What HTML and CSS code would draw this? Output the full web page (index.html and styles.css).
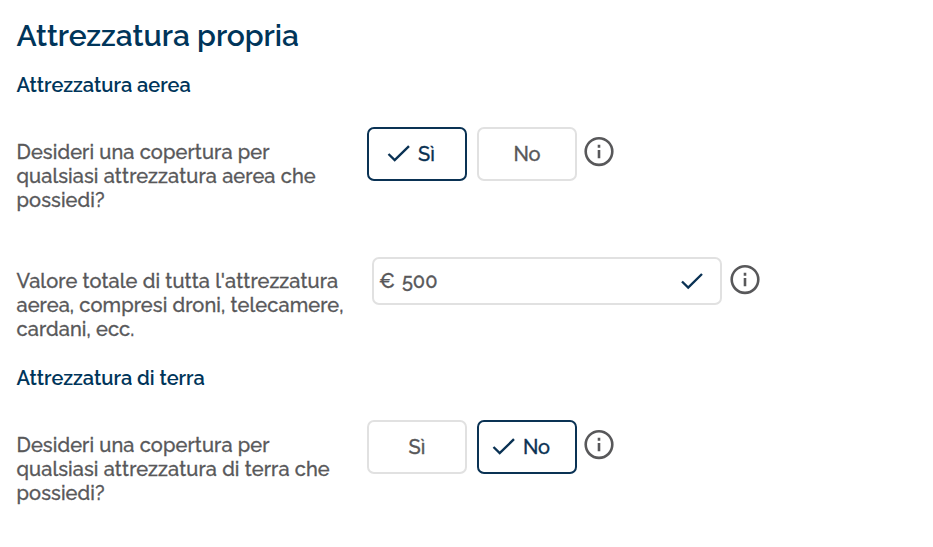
FILE: index.html
```
<!DOCTYPE html>
<html lang="it">

<head>
	<meta charset="UTF-8">
	<meta name="viewport" content="width=device-width, initial-scale=1.0">
	<title>Attrezzatura propria</title>
	<link rel="stylesheet" href="styles.css">
</head>

<body>
	<h1>Attrezzatura propria</h1>

	<h2>Attrezzatura aerea</h2>
	<div class="row row-choice">
		<div class="question">
			Desideri una copertura per<br>
			qualsiasi attrezzatura aerea che<br>
			possiedi?
		</div>
		<button class="btn btn-selected">
			<svg class="check" viewBox="0 0 24 18"><path d="M1.5 9 L7.7 15 L22 1.2" /></svg>
			<span>Sì</span>
		</button>
		<button class="btn"><span>No</span></button>
		<svg class="info" viewBox="0 0 30 30"><circle cx="15" cy="14.6" r="13.3" /><path d="M15 13v8.3M15 7.8v3" /></svg>
	</div>

	<div class="row row-value">
		<div class="question">
			Valore totale di tutta l'attrezzatura<br>
			aerea, compresi droni, telecamere,<br>
			cardani, ecc.
		</div>
		<div class="field">
			<span class="currency">€</span>
			<span class="amount">500</span>
			<svg class="check" viewBox="0 0 24 18"><path d="M2 9.5 L8.2 15.5 L22 2" /></svg>
		</div>
		<svg class="info" viewBox="0 0 30 30"><circle cx="15" cy="14.6" r="13.3" /><path d="M15 13v8.3M15 7.8v3" /></svg>
	</div>

	<h2>Attrezzatura di terra</h2>
	<div class="row row-choice">
		<div class="question">
			Desideri una copertura per<br>
			qualsiasi attrezzatura di terra che<br>
			possiedi?
		</div>
		<button class="btn"><span>Sì</span></button>
		<button class="btn btn-selected">
			<svg class="check" viewBox="0 0 24 18"><path d="M1.5 9 L7.7 15 L22 1.2" /></svg>
			<span>No</span>
		</button>
		<svg class="info" viewBox="0 0 30 30"><circle cx="15" cy="14.6" r="13.3" /><path d="M15 13v8.3M15 7.8v3" /></svg>
	</div>
</body>

</html>
```

FILE: styles.css
```
* {
	box-sizing: border-box;
	font-family: Raleway, Lato, sans-serif;
}

body {
	margin: 0;
	padding: 16px 16px 0 16.5px;
	background-color: #fff;
	color: #58585a;
	font-size: 20px;
	font-weight: 500;
	line-height: 24px;
}

h1,
h2 {
	margin: 0;
	color: #00355a;
	font-weight: 600;
}

h1 {
	height: 57px;
	font-size: 30px;
	line-height: 40px;
	letter-spacing: -0.05px;
}

h2 {
	height: 54px;
	font-size: 20px;
	line-height: 24px;
	letter-spacing: -0.02px;
}

.row {
	display: flex;
	align-items: flex-start;
}

.row-choice {
	height: 130px;
}

.row-value {
	height: 109px;
}

.question {
	flex: none;
	width: 350.5px;
	padding-top: 13px;
	letter-spacing: 0.11px;
	white-space: nowrap;
}

.question,
.btn,
.field {
	-webkit-text-stroke: 0.3px;
}

.row-value .question {
	width: 355.5px;
	padding-top: 12px;
}

.btn {
	display: flex;
	align-items: center;
	justify-content: center;
	width: 100px;
	height: 54px;
	margin-right: 10px;
	padding: 0;
	border: 2px solid #e1e1e1;
	border-radius: 7px;
	background-color: #fff;
	color: #58585a;
	font-size: 20px;
	font-weight: 500;
}

.btn-selected {
	border-color: #0a3254;
	color: #0a3254;
	gap: 7px;
	padding-right: 12px;
}

.check {
	width: 24px;
	height: 18px;
	fill: none;
	stroke: #0a3254;
	stroke-width: 2.4;
}

.info {
	width: 30px;
	height: 30px;
	margin-top: 10px;
	margin-left: -3px;
	fill: none;
	stroke: #58585a;
	stroke-width: 2.6;
}

.row-value .info {
	margin-top: 8px;
	margin-left: 8px;
}

.field {
	display: flex;
	align-items: center;
	width: 350px;
	height: 48px;
	padding: 0 16px 0 5px;
	border: 2px solid #e1e1e1;
	border-radius: 7px;
}

.amount {
	flex: 1;
	margin-left: 7px;
}
```
